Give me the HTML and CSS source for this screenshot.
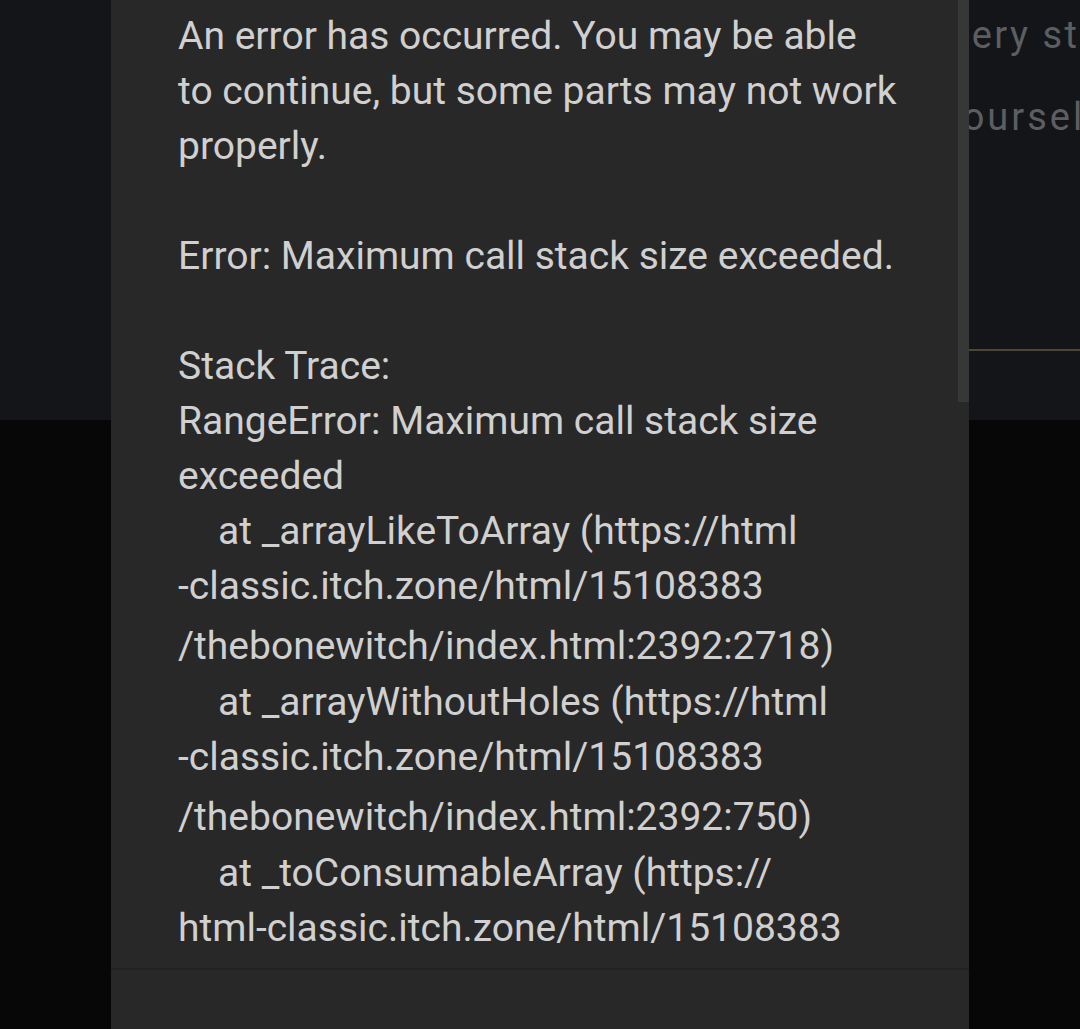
FILE: index.html
```html
<!DOCTYPE html>
<html>
<head>
<meta charset="utf-8">
<link rel="stylesheet" href="styles.css">
</head>
<body>
<div class="page">
  <section class="backdrop">
    <div class="bg-text">
      <p class="bg-line l1">very strange</p>
      <p class="bg-line l2">yourself</p>
    </div>
    <div class="bg-rule"></div>
  </section>
  <section class="below"></section>

  <div class="dialog">
    <div class="scroll">
      <div class="content">
        <p class="ln">An error has occurred. You may be able</p>
        <p class="ln">to continue, but some parts may not work</p>
        <p class="ln">properly.</p>
        <p class="ln blank"></p>
        <p class="ln">Error: Maximum call stack size exceeded.</p>
        <p class="ln blank"></p>
        <p class="ln">Stack Trace:</p>
        <p class="ln">RangeError: Maximum call stack size</p>
        <p class="ln">exceeded</p>
        <p class="ln ind">at _arrayLikeToArray (https://html</p>
        <p class="ln">-classic.itch.zone/html/15108383</p>
        <p class="ln tall">/thebonewitch/index.html:2392:2718)</p>
        <p class="ln ind">at _arrayWithoutHoles (https://html</p>
        <p class="ln">-classic.itch.zone/html/15108383</p>
        <p class="ln tall">/thebonewitch/index.html:2392:750)</p>
        <p class="ln ind">at _toConsumableArray (https://</p>
        <p class="ln">html-classic.itch.zone/html/15108383</p>
      </div>
      <div class="thumb"></div>
    </div>
    <div class="footer"></div>
  </div>
</div>
</body>
</html>
```

FILE: styles.css
```css
html, body {
  margin: 0;
  padding: 0;
}
body {
  background: #070707;
  width: 1080px;
  height: 1029px;
  overflow: hidden;
}
.page {
  position: relative;
  width: 1080px;
  height: 1029px;
}
.backdrop {
  height: 420px;
  background: #131519;
  display: flex;
  flex-direction: column;
  overflow: hidden;
}
.bg-text {
  display: flex;
  flex-direction: column;
  gap: 18px;
  padding-top: 3px;
  white-space: nowrap;
}
.bg-line {
  margin: 0;
  font-family: Roboto, "Noto Sans", sans-serif;
  font-size: 38px;
  letter-spacing: 2.5px;
  line-height: 64px;
  color: #5c5e61;
}
.bg-line.l1 {
  padding-left: 951px;
}
.bg-line.l2 {
  padding-left: 942px;
  letter-spacing: 3px;
}
.bg-rule {
  margin-top: 200px;
  margin-left: 700px;
  height: 2px;
  background: #4b4638;
}
.below {
  height: 609px;
}
.dialog {
  position: absolute;
  left: 111px;
  top: 0;
  width: 858px;
  height: 1029px;
  background: #282828;
  display: flex;
  flex-direction: column;
}
.scroll {
  height: 968px;
  display: flex;
  overflow: hidden;
}
.content {
  flex: 1;
  padding-left: 67px;
  padding-top: 9px;
  font-family: Roboto, "Noto Sans", sans-serif;
  font-size: 39px;
  color: #d0d0d0;
}
.ln {
  margin: 0;
  height: 55px;
  line-height: 55px;
  white-space: nowrap;
}
.ln.ind {
  padding-left: 40px;
}
.ln.tall {
  margin-top: 5px;
  margin-bottom: 1px;
}
.thumb {
  width: 11px;
  height: 402px;
  background: #363837;
}
.footer {
  flex: 1;
  border-top: 2px solid #222222;
}
```
